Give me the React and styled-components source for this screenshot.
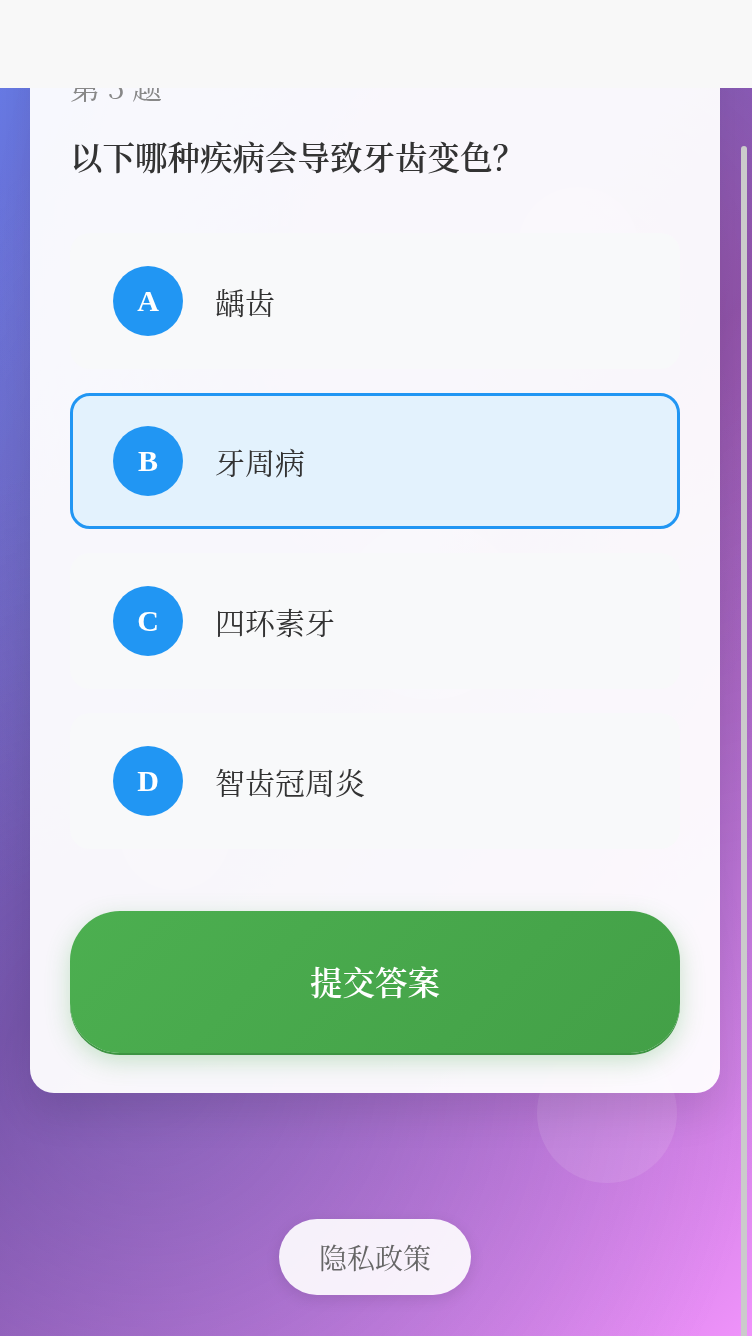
import React, { useState } from 'react'
import styled, { createGlobalStyle } from 'styled-components'

const GlobalStyle = createGlobalStyle`
  * { box-sizing: border-box; }
  html, body { margin: 0; padding: 0; }
  body {
    font-family: "Noto Serif CJK SC", "Liberation Serif", serif;
    min-height: 100vh;
    overflow: hidden;
    background: linear-gradient(135deg, #667eea 0%, #764ba2 50%, #f093fb 100%);
  }
`

const Page = styled.div`
  position: relative;
  max-width: 750px;
  min-height: 100vh;
  padding-top: 25px;
  &::before {
    content: '';
    position: fixed;
    inset: 0;
    pointer-events: none;
    background:
      radial-gradient(circle at 20% 80%, rgba(120, 119, 198, 0.3) 0%, transparent 50%),
      radial-gradient(circle at 80% 20%, rgba(255, 119, 198, 0.25) 0%, transparent 50%),
      radial-gradient(circle at 40% 40%, rgba(120, 219, 255, 0.15) 0%, transparent 50%);
  }
`

/* floating decoration bubbles, free placement on the backdrop */
const Bubble = styled.div`
  position: absolute;
  border-radius: 50%;
  background: rgba(255, 255, 255, 0.1);
  left: ${p => p.x}px;
  top: ${p => p.y}px;
  width: ${p => p.size}px;
  height: ${p => p.size}px;
`

const Header = styled.div`
  position: fixed;
  top: 0;
  left: 0;
  right: 0;
  height: 88px;
  background: #f8f8f8;
  z-index: 10;
`

const ScrollThumb = styled.div`
  position: fixed;
  right: 5px;
  top: 146px;
  bottom: -10px;
  width: 6px;
  border-radius: 3px;
  background: #cbcbcb;
  z-index: 11;
`

const Card = styled.div`
  position: relative;
  z-index: 1;
  margin: 0 30px;
  padding: 40px;
  border-radius: 24px;
  background: rgba(255, 255, 255, 0.95);
  box-shadow: 0 20px 40px rgba(0, 0, 0, 0.1);
`

const QuestionNo = styled.div`
  font-size: 30px;
  line-height: 42px;
  color: #888;
  margin-bottom: 27px;
`

const QuestionTitle = styled.h2`
  margin: 0 0 54px;
  font-size: 32.5px;
  line-height: 45px;
  font-weight: 600;
  color: #333;
`

const OptionList = styled.div`
  display: flex;
  flex-direction: column;
  gap: 24px;
  margin-bottom: 62px;
`

const Option = styled.div`
  display: flex;
  align-items: center;
  gap: 32px;
  padding: 30px 40px;
  border-radius: 20px;
  border: 3px solid ${p => (p.selected ? '#2196f3' : 'transparent')};
  background: ${p => (p.selected ? '#e3f2fd' : '#f8f9fa')};
  cursor: pointer;
`

const Letter = styled.div`
  flex: none;
  width: 70px;
  height: 70px;
  border-radius: 50%;
  background: #2196f3;
  color: #fff;
  display: flex;
  align-items: center;
  justify-content: center;
  font-family: "Liberation Serif", serif;
  font-size: 30px;
  font-weight: bold;
`

const OptionText = styled.span`
  font-size: 30px;
  line-height: 40px;
  color: #333;
`

const SubmitButton = styled.button`
  display: block;
  width: 100%;
  border: none;
  padding: 50px 0;
  border-radius: 50px;
  font-family: inherit;
  font-size: 32.5px;
  line-height: 41.6px;
  font-weight: 600;
  color: #fff;
  background: linear-gradient(135deg, #4caf50 0%, #43a047 100%);
  box-shadow: 0 2px 0 #3d9442, 0 8px 25px rgba(76, 175, 80, 0.3);
`

const Footer = styled.div`
  position: relative;
  z-index: 1;
  display: flex;
  justify-content: center;
  padding: 126px 0 42px;
`

const PrivacyLink = styled.a`
  display: block;
  padding: 18px 40px;
  border-radius: 38px;
  font-size: 28px;
  line-height: 40px;
  color: #666;
  text-decoration: none;
  background: rgba(255, 255, 255, 0.9);
  box-shadow: 0 4px 15px rgba(0, 0, 0, 0.1);
`

const options = [
  { key: 'A', text: '龋齿' },
  { key: 'B', text: '牙周病' },
  { key: 'C', text: '四环素牙' },
  { key: 'D', text: '智齿冠周炎' },
]

export default function App() {
  const [selected, setSelected] = useState('B')

  return (
    <>
      <GlobalStyle />
      <Header />
      <ScrollThumb />
      <Page>
        <Bubble x={518} y={187} size={120} />
        <Bubble x={340} y={520} size={180} />
        <Bubble x={120} y={780} size={110} />
        <Bubble x={537} y={1043} size={140} />
        <Card>
          <QuestionNo>第 5 题</QuestionNo>
          <QuestionTitle>以下哪种疾病会导致牙齿变色？</QuestionTitle>
          <OptionList>
            {options.map(o => (
              <Option
                key={o.key}
                selected={selected === o.key}
                onClick={() => setSelected(o.key)}
              >
                <Letter>{o.key}</Letter>
                <OptionText>{o.text}</OptionText>
              </Option>
            ))}
          </OptionList>
          <SubmitButton>提交答案</SubmitButton>
        </Card>
        <Footer>
          <PrivacyLink href="#">隐私政策</PrivacyLink>
        </Footer>
      </Page>
    </>
  )
}
